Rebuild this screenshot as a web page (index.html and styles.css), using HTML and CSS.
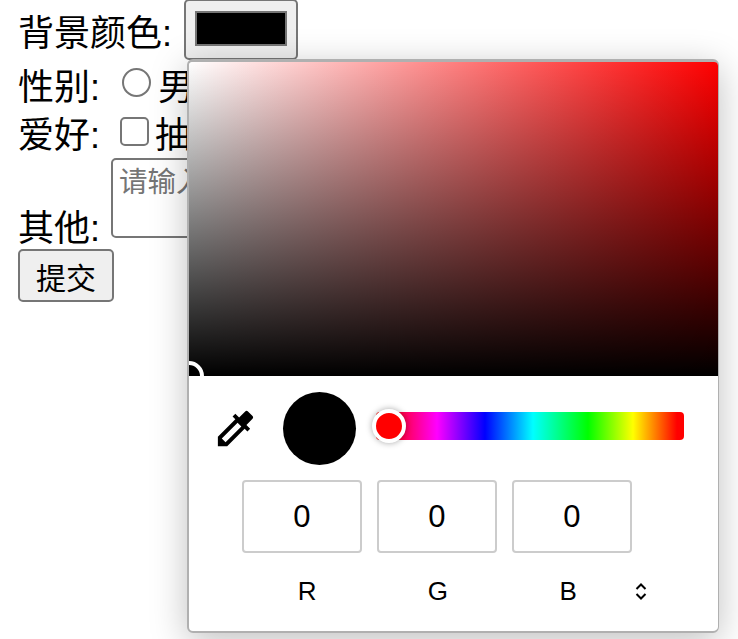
FILE: index.html
```html
<!DOCTYPE html>
<html lang="zh-CN">
<head>
    <meta charset="UTF-8">
    <meta name="viewport" content="width=device-width, initial-scale=1.0">
    <title>表单</title>
    <link rel="stylesheet" href="styles.css">
</head>
<body>
    <form class="form">
        <div class="row row-color">
            <label class="label">背景颜色:</label>
            <button type="button" class="color-btn"><span class="color-swatch"></span></button>
        </div>
        <div class="row row-gender">
            <label class="label">性别:</label>
            <span class="radio"></span>
            <span class="option">男</span>
        </div>
        <div class="row row-hobby">
            <label class="label">爱好:</label>
            <span class="checkbox"></span>
            <span class="option">抽烟</span>
        </div>
        <div class="row row-other">
            <label class="label">其他:</label>
            <div class="textarea">请输入内容</div>
        </div>
        <button type="button" class="submit">提交</button>
    </form>

    <!-- Color picker popup -->
    <div class="picker">
        <div class="sat">
            <span class="sat-thumb"></span>
        </div>
        <div class="tools">
            <svg class="dropper" viewBox="0 0 24 24"><path d="M20.71 5.63l-2.34-2.34c-.39-.39-1.02-.39-1.41 0l-3.12 3.12-1.93-1.91-1.41 1.41 1.42 1.42L3 16.25V21h4.75l8.92-8.92 1.42 1.42 1.41-1.41-1.92-1.92 3.12-3.12c.4-.4.4-1.03.01-1.42zM6.92 19L5 17.08l8.06-8.06 1.92 1.92L6.92 19z"/></svg>
            <span class="preview"></span>
            <div class="hue">
                <span class="hue-thumb"></span>
            </div>
        </div>
        <div class="inputs">
            <div class="num">0</div>
            <div class="num">0</div>
            <div class="num">0</div>
        </div>
        <div class="labels">
            <span class="chan">R</span>
            <span class="chan">G</span>
            <span class="chan">B</span>
            <svg class="spin" viewBox="0 0 12 17"><path d="M1.5 6L6 1.5 10.500 6M1.500 11L6 15.500 10.500 11"/></svg>
        </div>
    </div>
</body>
</html>
```

FILE: styles.css
```css
body {
    margin: 0;
    padding: 0;
    height: 639px;
    overflow: hidden;
    position: relative;
    background: #fff;
    color: #000;
    font-family: "Liberation Sans", "Noto Sans CJK SC", sans-serif;
}

.form {
    margin-top: -1px;
    padding-left: 18px;
}

.row {
    display: flex;
    align-items: center;
}

.label,
.option {
    font-size: 36px;
    line-height: 40px;
}

.row-color {
    height: 60px;
}

.row-color .label {
    margin-top: 10px;
}

.color-btn {
    margin-left: 12px;
    width: 114px;
    height: 61px;
    padding: 0;
    background: #efefef;
    border: 2px solid #767676;
    border-radius: 5px;
    display: flex;
    align-items: center;
    justify-content: center;
}

.color-swatch {
    display: block;
    width: 92px;
    height: 35px;
    margin-top: -1px;
    background: #000;
    border: 2px solid #767676;
    box-sizing: border-box;
}

.row-gender {
    height: 49px;
}

.row-gender .label,
.row-gender .option {
    margin-top: 8px;
}

.radio {
    width: 29px;
    height: 29px;
    margin: -3px 7px 0 22px;
    box-sizing: border-box;
    border: 2px solid #767676;
    border-radius: 50%;
}

.row-hobby {
    height: 49px;
}

.row-hobby .label,
.row-hobby .option {
    margin-top: 6px;
}

.checkbox {
    width: 29px;
    height: 29px;
    margin: -3px 6px 0 20px;
    box-sizing: border-box;
    border: 2px solid #767676;
    border-radius: 5px;
}

.row-other {
    align-items: flex-end;
    height: 81px;
}

.row-other .label {
    margin-bottom: -11px;
}

.textarea {
    margin-left: 11px;
    width: 200px;
    height: 80px;
    padding: 4px 6px;
    box-sizing: border-box;
    border: 2px solid #767676;
    border-radius: 5px;
    color: #757575;
    font-size: 28.5px;
    line-height: 36px;
}

.submit {
    display: block;
    margin-top: 11px;
    width: 96px;
    height: 53px;
    padding: 0;
    background: #efefef;
    border: 2px solid #767676;
    border-radius: 5px;
    color: #000;
    font-family: "Liberation Sans", "Noto Sans CJK SC", sans-serif;
    font-size: 30px;
}

/* Color picker */
.picker {
    position: absolute;
    top: 59px;
    left: 187px;
    width: 532px;
    height: 574px;
    box-sizing: border-box;
    background: #fff;
    border-style: solid;
    border-color: #b0b0b0;
    border-width: 3px 1px 2px 2px;
    border-radius: 6px;
    box-shadow: 0 8px 36px rgba(0, 0, 0, 0.25);
}

.sat {
    position: relative;
    height: 314px;
    overflow: hidden;
    border-radius: 4px 4px 0 0;
    background: linear-gradient(to top, #000, rgba(0, 0, 0, 0)), linear-gradient(to right, #fff, #f00);
}

.sat-thumb {
    position: absolute;
    left: -15px;
    bottom: -15px;
    width: 30px;
    height: 30px;
    box-sizing: border-box;
    border: 4px solid #fff;
    border-radius: 50%;
    background: #000;
}

.tools {
    display: flex;
    align-items: center;
    height: 104px;
    padding-left: 23px;
}

.dropper {
    width: 47px;
    height: 47px;
    flex: none;
    margin-top: 1px;
}

.preview {
    width: 73px;
    height: 73px;
    flex: none;
    margin-left: 24px;
    border-radius: 50%;
    background: #000;
}

.hue {
    position: relative;
    width: 308px;
    height: 28px;
    margin-left: 20px;
    margin-top: -5px;
    border-radius: 4px;
    background: linear-gradient(to right, #f00 12px, #f0f 61px, #00f 109px, #0ff 157px, #0f0 212px, #ff0 257px, #f00 301px);
}

.hue-thumb {
    position: absolute;
    left: -4px;
    top: -3px;
    width: 34px;
    height: 34px;
    box-sizing: border-box;
    border: 4px solid #fff;
    border-radius: 50%;
    background: #f00;
    box-shadow: 0 0 6px rgba(0, 0, 0, 0.35);
}

.inputs {
    display: flex;
    gap: 15.5px;
    padding-left: 53px;
}

.num {
    width: 119.500px;
    height: 73px;
    box-sizing: border-box;
    border: 2px solid #ccc;
    border-radius: 4px;
    font-size: 31px;
    line-height: 69px;
    text-align: center;
}

.labels {
    display: flex;
    align-items: center;
    height: 30px;
    margin-top: 23px;
    padding-left: 53px;
}

.chan {
    width: 130.5px;
    font-size: 26px;
    text-align: center;
}

.spin {
    width: 12px;
    height: 17px;
    margin-left: 1px;
    fill: none;
    stroke: #000;
    stroke-width: 2;
}
```
